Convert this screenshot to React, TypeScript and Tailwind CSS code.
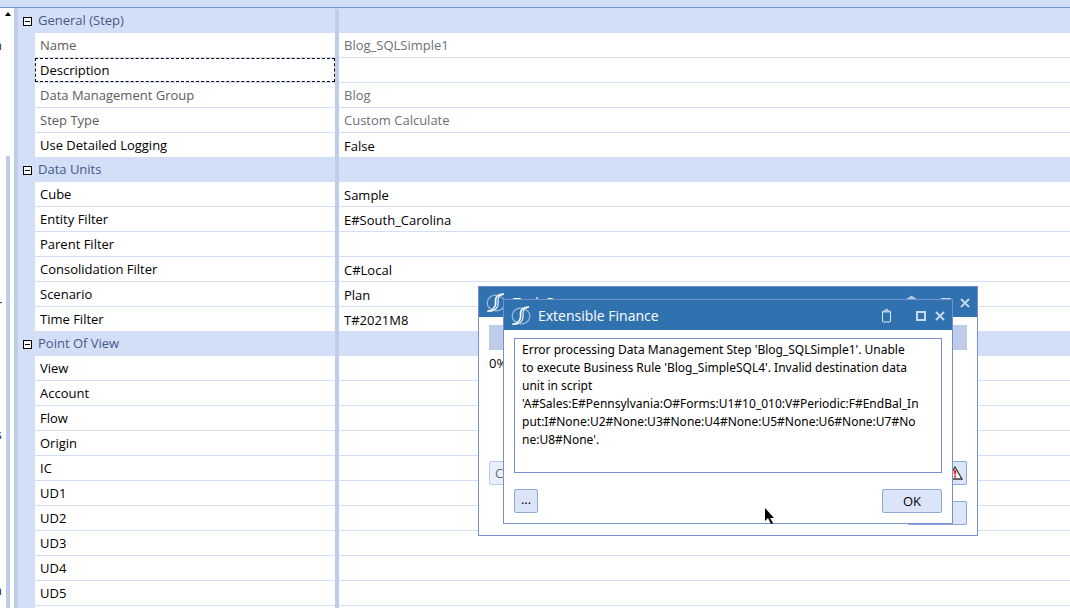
import { Fragment, useState } from "react";
import type { ReactNode } from "react";

interface IRow {
  label: string;
  value?: string;
  readOnly?: boolean;
  focused?: boolean;
}

interface IGroup {
  title: string;
  rows: IRow[];
}

const groups: IGroup[] = [
  {
    title: "General (Step)",
    rows: [
      { label: "Name", value: "Blog_SQLSimple1", readOnly: true },
      { label: "Description", focused: true },
      { label: "Data Management Group", value: "Blog", readOnly: true },
      { label: "Step Type", value: "Custom Calculate", readOnly: true },
      { label: "Use Detailed Logging", value: "False" },
    ],
  },
  {
    title: "Data Units",
    rows: [
      { label: "Cube", value: "Sample" },
      { label: "Entity Filter", value: "E#South_Carolina" },
      { label: "Parent Filter" },
      { label: "Consolidation Filter", value: "C#Local" },
      { label: "Scenario", value: "Plan" },
      { label: "Time Filter", value: "T#2021M8" },
    ],
  },
  {
    title: "Point Of View",
    rows: [
      { label: "View" },
      { label: "Account" },
      { label: "Flow" },
      { label: "Origin" },
      { label: "IC" },
      { label: "UD1" },
      { label: "UD2" },
      { label: "UD3" },
      { label: "UD4" },
      { label: "UD5" },
    ],
  },
];

const errorText = [
  "Error processing Data Management Step 'Blog_SQLSimple1'. Unable",
  "to execute Business Rule 'Blog_SimpleSQL4'. Invalid destination data",
  "unit in script",
  "'A#Sales:E#Pennsylvania:O#Forms:U1#10_010:V#Periodic:F#EndBal_In",
  "put:I#None:U2#None:U3#None:U4#None:U5#None:U6#None:U7#No",
  "ne:U8#None'.",
].join("\n");

const Logo = () => (
  <svg width="20" height="20" viewBox="0 0 20 20" fill="none" aria-hidden="true">
    <path d="M11 2.200C5.500 1.600 1.300 5 1.200 9.800c0 3.200 1.500 5.400 4.300 6.200" stroke="#9dbbd8" strokeWidth="1.300" />
    <path d="M9 17.800c5.500.6 9.700-2.800 9.800-7.600 0-3.200-1.500-5.400-4.300-6.200" stroke="#9dbbd8" strokeWidth="1.300" />
    <path d="M18 1.200c-5-.2-8.500 2-8.500 5.800 0 2.200.6 3.600-.4 6C8 15.700 5 17.700 1.500 18.300" stroke="#fff" strokeWidth="1.700" />
    <path d="M18 1.200c-3.500.8-6 2.800-6 5.800 0 2.500.6 4-.5 6.500-1.400 3.200-5 5-10 4.800" stroke="#e6eef6" strokeWidth="1.300" />
  </svg>
);

const ClipboardIcon = () => (
  <svg width="11" height="15" viewBox="0 0 11 15" fill="none" aria-hidden="true">
    <path d="M1.500 3.500h8v9.500q0 1-1 1h-6q-1 0-1-1z" stroke="#e3ecf5" />
    <path d="M2 4.500V2.500h1.500q.3-1.700 2-1.700t2 1.700H9v2z" fill="#b5cce2" />
  </svg>
);

const MaximizeIcon = () => (
  <svg width="10" height="10" viewBox="0 0 10 10" fill="none" aria-hidden="true">
    <rect x="1" y="1" width="8" height="8" stroke="#c9daea" strokeWidth="2" />
  </svg>
);

const CloseIcon = () => (
  <svg width="10" height="10" viewBox="0 0 10 10" fill="none" aria-hidden="true">
    <path d="M1 1l8 8M9 1L1 9" stroke="#c9daea" strokeWidth="1.800" />
  </svg>
);

const WarningIcon = () => (
  <svg width="16" height="14" viewBox="0 0 16 14" className="shrink-0" aria-hidden="true">
    <path d="M8 1l7 12H1z" fill="#fff" stroke="#333" strokeWidth="1.300" />
    <path d="M8 4v4.500M8 9.500v2" stroke="#e8301c" strokeWidth="2.400" />
  </svg>
);

const TitleBar = ({ title }: { title: string }) => (
  <header className="flex h-[30px] items-center bg-[#3071af] px-[7px] pt-px text-white">
    <Logo />
    <h2 className="ml-[7px] flex-1 text-sm leading-5">{title}</h2>
    <button type="button" aria-label="Copy" className="mr-6"><ClipboardIcon /></button>
    <button type="button" aria-label="Maximize" className="mr-[9px]"><MaximizeIcon /></button>
    <button type="button" aria-label="Close"><CloseIcon /></button>
  </header>
);

const DialogButton = ({ className, children, label, disabled }: { className: string; children?: ReactNode; label?: string; disabled?: boolean }) => (
  <button
    type="button"
    aria-label={label}
    disabled={disabled}
    className={`flex h-6 items-center rounded-xs border border-[#8fa8d8] bg-[#dce5f8] ${className}`}
  >
    {children}
  </button>
);

const PropertyGrid = () => {
  const [closed, setClosed] = useState<string[]>([]);

  const toggle = (title: string) => {
    setClosed(closed.includes(title) ? closed.filter((item) => item !== title) : [...closed, title]);
  };

  return (
    <table className="w-full table-fixed border-separate border-spacing-0 text-left">
      <colgroup>
        <col className="w-[17px]" />
        <col className="w-[300px]" />
        <col className="w-1" />
        <col />
      </colgroup>
      <tbody>
        {groups.map((group) => (
          <Fragment key={group.title}>
            <tr className="h-6 bg-[#d3dff7]">
              <th colSpan={2} className="p-0 font-normal">
                <button
                  type="button"
                  aria-expanded={!closed.includes(group.title)}
                  onClick={() => toggle(group.title)}
                  className="flex h-6 items-center gap-1.5 pb-0.5 pl-[5px] text-[#44598a]"
                >
                  <svg width="9" height="9" viewBox="0 0 9 9" className="mt-0.5" aria-hidden="true">
                    <rect x="0.5" y="0.5" width="8" height="8" fill="#fff" stroke="#000" />
                    <path d="M2 4.500h5" stroke="#000" />
                  </svg>
                  {group.title}
                </button>
              </th>
              <td className="bg-[#c0cdea] p-0"></td>
              <td className="p-0"></td>
            </tr>
            {!closed.includes(group.title) &&
              group.rows.map((row) => (
                <tr key={row.label} className="h-[25px]">
                  <td className="bg-[#d3dff7] p-0"></td>
                  <th className={`border-b border-[#d3dff7] p-0 font-normal ${row.readOnly ? "text-[#5c5c5c]" : "text-black"}`}>
                    <div className={`h-6 pl-[5px] leading-6 ${row.focused ? "outline-1 -outline-offset-1 outline-dashed outline-black" : ""}`}>
                      {row.label}
                    </div>
                  </th>
                  <td className="bg-[#c0cdea] p-0"></td>
                  <td className={`border-b border-[#d3dff7] pr-0 pb-0 pl-[5px] ${row.readOnly ? "pt-0 text-[#6d7078]" : "pt-0.5 text-black"}`}>
                    {row.value}
                  </td>
                </tr>
              ))}
          </Fragment>
        ))}
        <tr className="h-[25px]">
          <td className="bg-[#d3dff7] p-0"></td>
          <td className="p-0"></td>
          <td className="bg-[#c0cdea] p-0"></td>
          <td className="p-0"></td>
        </tr>
      </tbody>
    </table>
  );
};

const App = () => {
  return (
    <div className="relative flex h-screen flex-col overflow-hidden bg-white font-['Open_Sans','Noto_Sans',sans-serif] text-[13px] leading-[18px]">
      <div className="h-2 shrink-0 border-b border-[#7391cf] bg-[#d3dff7]"></div>
      <div className="flex min-h-0 flex-1">
        <aside className="flex w-3.5 shrink-0 justify-between pr-1">
          {/* ends of the tree item names, scrolled off to the left */}
          <div className="flex w-0.5 flex-col items-end overflow-hidden text-[#401030]">
            <span className="mt-7">n</span>
            <span className="mt-[241px]">r</span>
            <span className="mt-28">s</span>
            <span className="mt-[138px]">a</span>
          </div>
          <div className="flex w-1 flex-col items-center">
            <svg width="6" height="4" viewBox="0 0 6 4" className="mt-1 shrink-0" aria-hidden="true">
              <path d="M3 0l3 4H0z" />
            </svg>
            <div className="mt-[140px] w-1 flex-1 bg-[#c0cdea]"></div>
          </div>
        </aside>
        <div className="w-1 shrink-0 bg-[#c0cdea]"></div>
        <main className="min-w-0 flex-1 overflow-hidden">
          <div className="h-px bg-[#d3dff7]"></div>
          <PropertyGrid />
        </main>
      </div>

      <section role="dialog" aria-label="Task Progress" className="absolute top-[286px] left-[478px] flex h-[250px] w-[500px] flex-col border border-[#7391cf] bg-white">
        <TitleBar title="Task Progress" />
        <div className="flex flex-1 flex-col px-2.5 pt-2">
          <div className="h-[25px] bg-[#c0cdea]"></div>
          <p className="mt-1 leading-[18px]">0%</p>
          <div className="mt-auto flex justify-between">
            <DialogButton className="w-20 pl-[5px] opacity-60" disabled>Cancel</DialogButton>
            <DialogButton className="w-6 justify-center" label="Show errors"><WarningIcon /></DialogButton>
          </div>
          <div className="mt-4 mb-2.5 flex justify-end">
            <DialogButton className="w-[60px]" label="Close" />
          </div>
        </div>
      </section>

      <section role="dialog" aria-label="Extensible Finance" className="absolute top-[299px] left-[503px] flex h-[225px] w-[450px] flex-col border border-[#7391cf] bg-white">
        <TitleBar title="Extensible Finance" />
        <div className="flex flex-1 flex-col px-2.5 pt-2 pb-2.5">
          <textarea
            readOnly
            aria-label="Message"
            defaultValue={errorText}
            className="block h-[135px] w-full resize-none overflow-hidden border border-[#7391cf] py-0.5 pr-1 pl-[7px] font-['Noto_Sans','Open_Sans',sans-serif] text-xs leading-[18px] outline-none"
          />
          <div className="mt-auto flex justify-between">
            <DialogButton className="w-6 justify-center pb-1">...</DialogButton>
            <DialogButton className="w-[60px] justify-center">OK</DialogButton>
          </div>
        </div>
      </section>

      <svg width="10" height="17" viewBox="0 0 10 17" className="absolute top-[508px] left-[765px]" aria-hidden="true">
        <path d="M0 0v13l3-3 3 6 2-1-3-5h4z" />
      </svg>
    </div>
  );
};

export default App;
